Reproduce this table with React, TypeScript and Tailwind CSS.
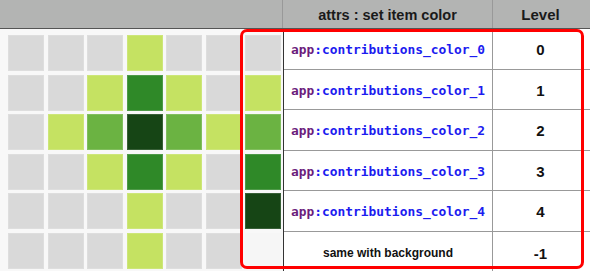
import React from 'react';

// level -> swatch colour (null = same as background)
const levelColors: Record<number, string> = {
  0: 'bg-[#d9d9d9]',
  1: 'bg-[#c5e262]',
  2: 'bg-[#6bb342]',
  3: 'bg-[#2f8928]',
  4: 'bg-[#164515]',
};

const pattern: (number | null)[][] = [
  [0, 0, 0, 1, 0, 0, 0],
  [0, 0, 1, 3, 1, 0, 1],
  [0, 1, 2, 4, 2, 1, 2],
  [0, 0, 1, 3, 1, 0, 3],
  [0, 0, 0, 1, 0, 0, 4],
  [0, 0, 0, 1, 0, 0, null],
];

const rows = [0, 1, 2, 3, 4];

const App: React.FC = () => {
  return (
    <div className="relative w-[590px] h-[271px] overflow-hidden bg-white font-['Liberation_Sans',Arial,sans-serif]">
      {/* header */}
      <div className="flex h-[29px] bg-[#b3b4b3] border-b border-[#555] text-[#1a1a1a] font-bold">
        <div className="w-[283px] shrink-0 border-r border-[#999]" />
        <div className="w-[210px] shrink-0 flex items-center justify-center text-[14.5px] pt-[3px] border-r border-[#999]">
          attrs : set item color
        </div>
        <div className="flex-1 flex items-center justify-center text-[15px] pt-[3px] pr-[2px]">Level</div>
      </div>

      <div className="flex h-[242px]">
        {/* contribution grid */}
        <div className="w-[284px] shrink-0 bg-[#f8f8f8] border-r border-[#333] pl-[8px] pt-[6px]">
          <div className="grid grid-cols-[repeat(7,36px)] gap-[3.5px]">
            {pattern.flat().map((level, i) => (
              <div
                key={i}
                className={`w-9 h-9 ${level === null ? 'bg-[#f6f6f6]' : `${levelColors[level]} border border-[#ffffff26]`}`}
              />
            ))}
          </div>
        </div>

        {/* attrs table */}
        <div className="flex-1 flex flex-col">
          {rows.map((n) => (
            <div key={n} className="flex h-[40.6px] border-b border-[#999] shrink-0">
              <div className="w-[209px] shrink-0 border-r border-[#999] flex items-center justify-center pt-[2px] font-['DejaVu_Sans_Mono',monospace] font-bold text-[12.9px] whitespace-nowrap">
                <span className="text-[#6b1c7c]">app</span>
                <span className="text-[#1c1cf0]">:contributions_color_{n}</span>
              </div>
              <div className="flex-1 flex items-center justify-center pt-[3px] font-bold text-[15px] text-[#111] pr-[2px]">{n}</div>
            </div>
          ))}
          <div className="flex flex-1">
            <div className="w-[209px] shrink-0 border-r border-[#999] flex items-center justify-center font-bold text-[12px] text-[#111] pt-[3px]">
              same with background
            </div>
            <div className="flex-1 flex items-center justify-center font-bold text-[15px] text-[#111] pt-[5px] pr-[2px]">-1</div>
          </div>
        </div>
      </div>

      {/* highlight around the legend column */}
      <div className="absolute left-[240px] top-[29px] w-[344px] h-[240px] border-[3px] border-[#ff0000] rounded-[7px] pointer-events-none" />
    </div>
  );
};

export default App;
